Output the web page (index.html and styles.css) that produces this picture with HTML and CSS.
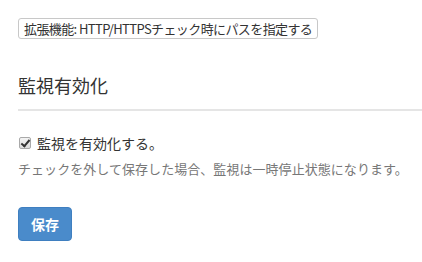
FILE: index.html
```html
<!DOCTYPE html>
<html lang="ja">
<head>
<meta charset="utf-8">
<link rel="stylesheet" href="styles.css">
</head>
<body>
<div class="page">
  <div class="ext-row"><button class="ext-btn" type="button">拡張機能: HTTP/HTTPSチェック時にパスを指定する</button></div>
  <h2 class="section-title">監視有効化</h2>
  <label class="check-row"><input type="checkbox" class="check" checked><span>監視を有効化する。</span></label>
  <p class="help">チェックを外して保存した場合、監視は一時停止状態になります。</p>
  <button class="save-btn" type="button">保存</button>
</div>
</body>
</html>
```
FILE: styles.css
```css
html, body {
  margin: 0;
  padding: 0;
  background: #fff;
}
body {
  font-family: "Noto Sans CJK JP", "Liberation Sans", sans-serif;
  color: #333;
  width: 422px;
  overflow: hidden;
}
.page {
  padding: 18px 0 0 18px;
  display: flex;
  flex-direction: column;
  align-items: flex-start;
}
.ext-row {
  display: flex;
}
.ext-btn {
  font-family: "Noto Sans CJK JP", "Liberation Sans", sans-serif;
  font-size: 13px;
  line-height: 17px;
  height: 21px;
  width: 300px;
  padding: 0 4px 0 5px;
  border: 1px solid #c8c8c8;
  border-radius: 3px;
  background: #fff;
  color: #333;
  white-space: nowrap;
  letter-spacing: -0.6px;
  text-align: left;
}
.section-title {
  align-self: stretch;
  margin: 36px 0 0 0;
  font-size: 18px;
  font-weight: normal;
  line-height: 20px;
  padding-bottom: 14px;
  border-bottom: 2px solid #e5e5e5;
  color: #333;
}
.check-row {
  margin-top: 22px;
  display: flex;
  align-items: center;
  font-size: 14px;
  line-height: 20px;
  color: #333;
}
.check {
  appearance: none;
  -webkit-appearance: none;
  width: 12px;
  height: 12px;
  margin: 0 6px 0 1px;
  border: 1px solid #a9a9a9;
  border-radius: 2px;
  background: linear-gradient(#f4f4f4, #dcdcdc);
  position: relative;
}
.check:checked::after {
  content: "";
  position: absolute;
  left: 3px;
  top: 0;
  width: 3px;
  height: 7px;
  border: solid #333;
  border-width: 0 2px 2px 0;
  transform: rotate(40deg);
}
.help {
  margin: 6px 0 0 0;
  font-size: 13px;
  line-height: 20px;
  letter-spacing: 0.05px;
  color: #777;
}
.save-btn {
  margin-top: 28px;
  width: 54px;
  height: 34px;
  border: 1px solid #3f7fc0;
  border-radius: 4px;
  background: #4a8bcb;
  color: #fff;
  font-family: "Noto Sans CJK JP", "Liberation Sans", sans-serif;
  font-size: 14px;
  font-weight: bold;
  padding: 0;
}
```
